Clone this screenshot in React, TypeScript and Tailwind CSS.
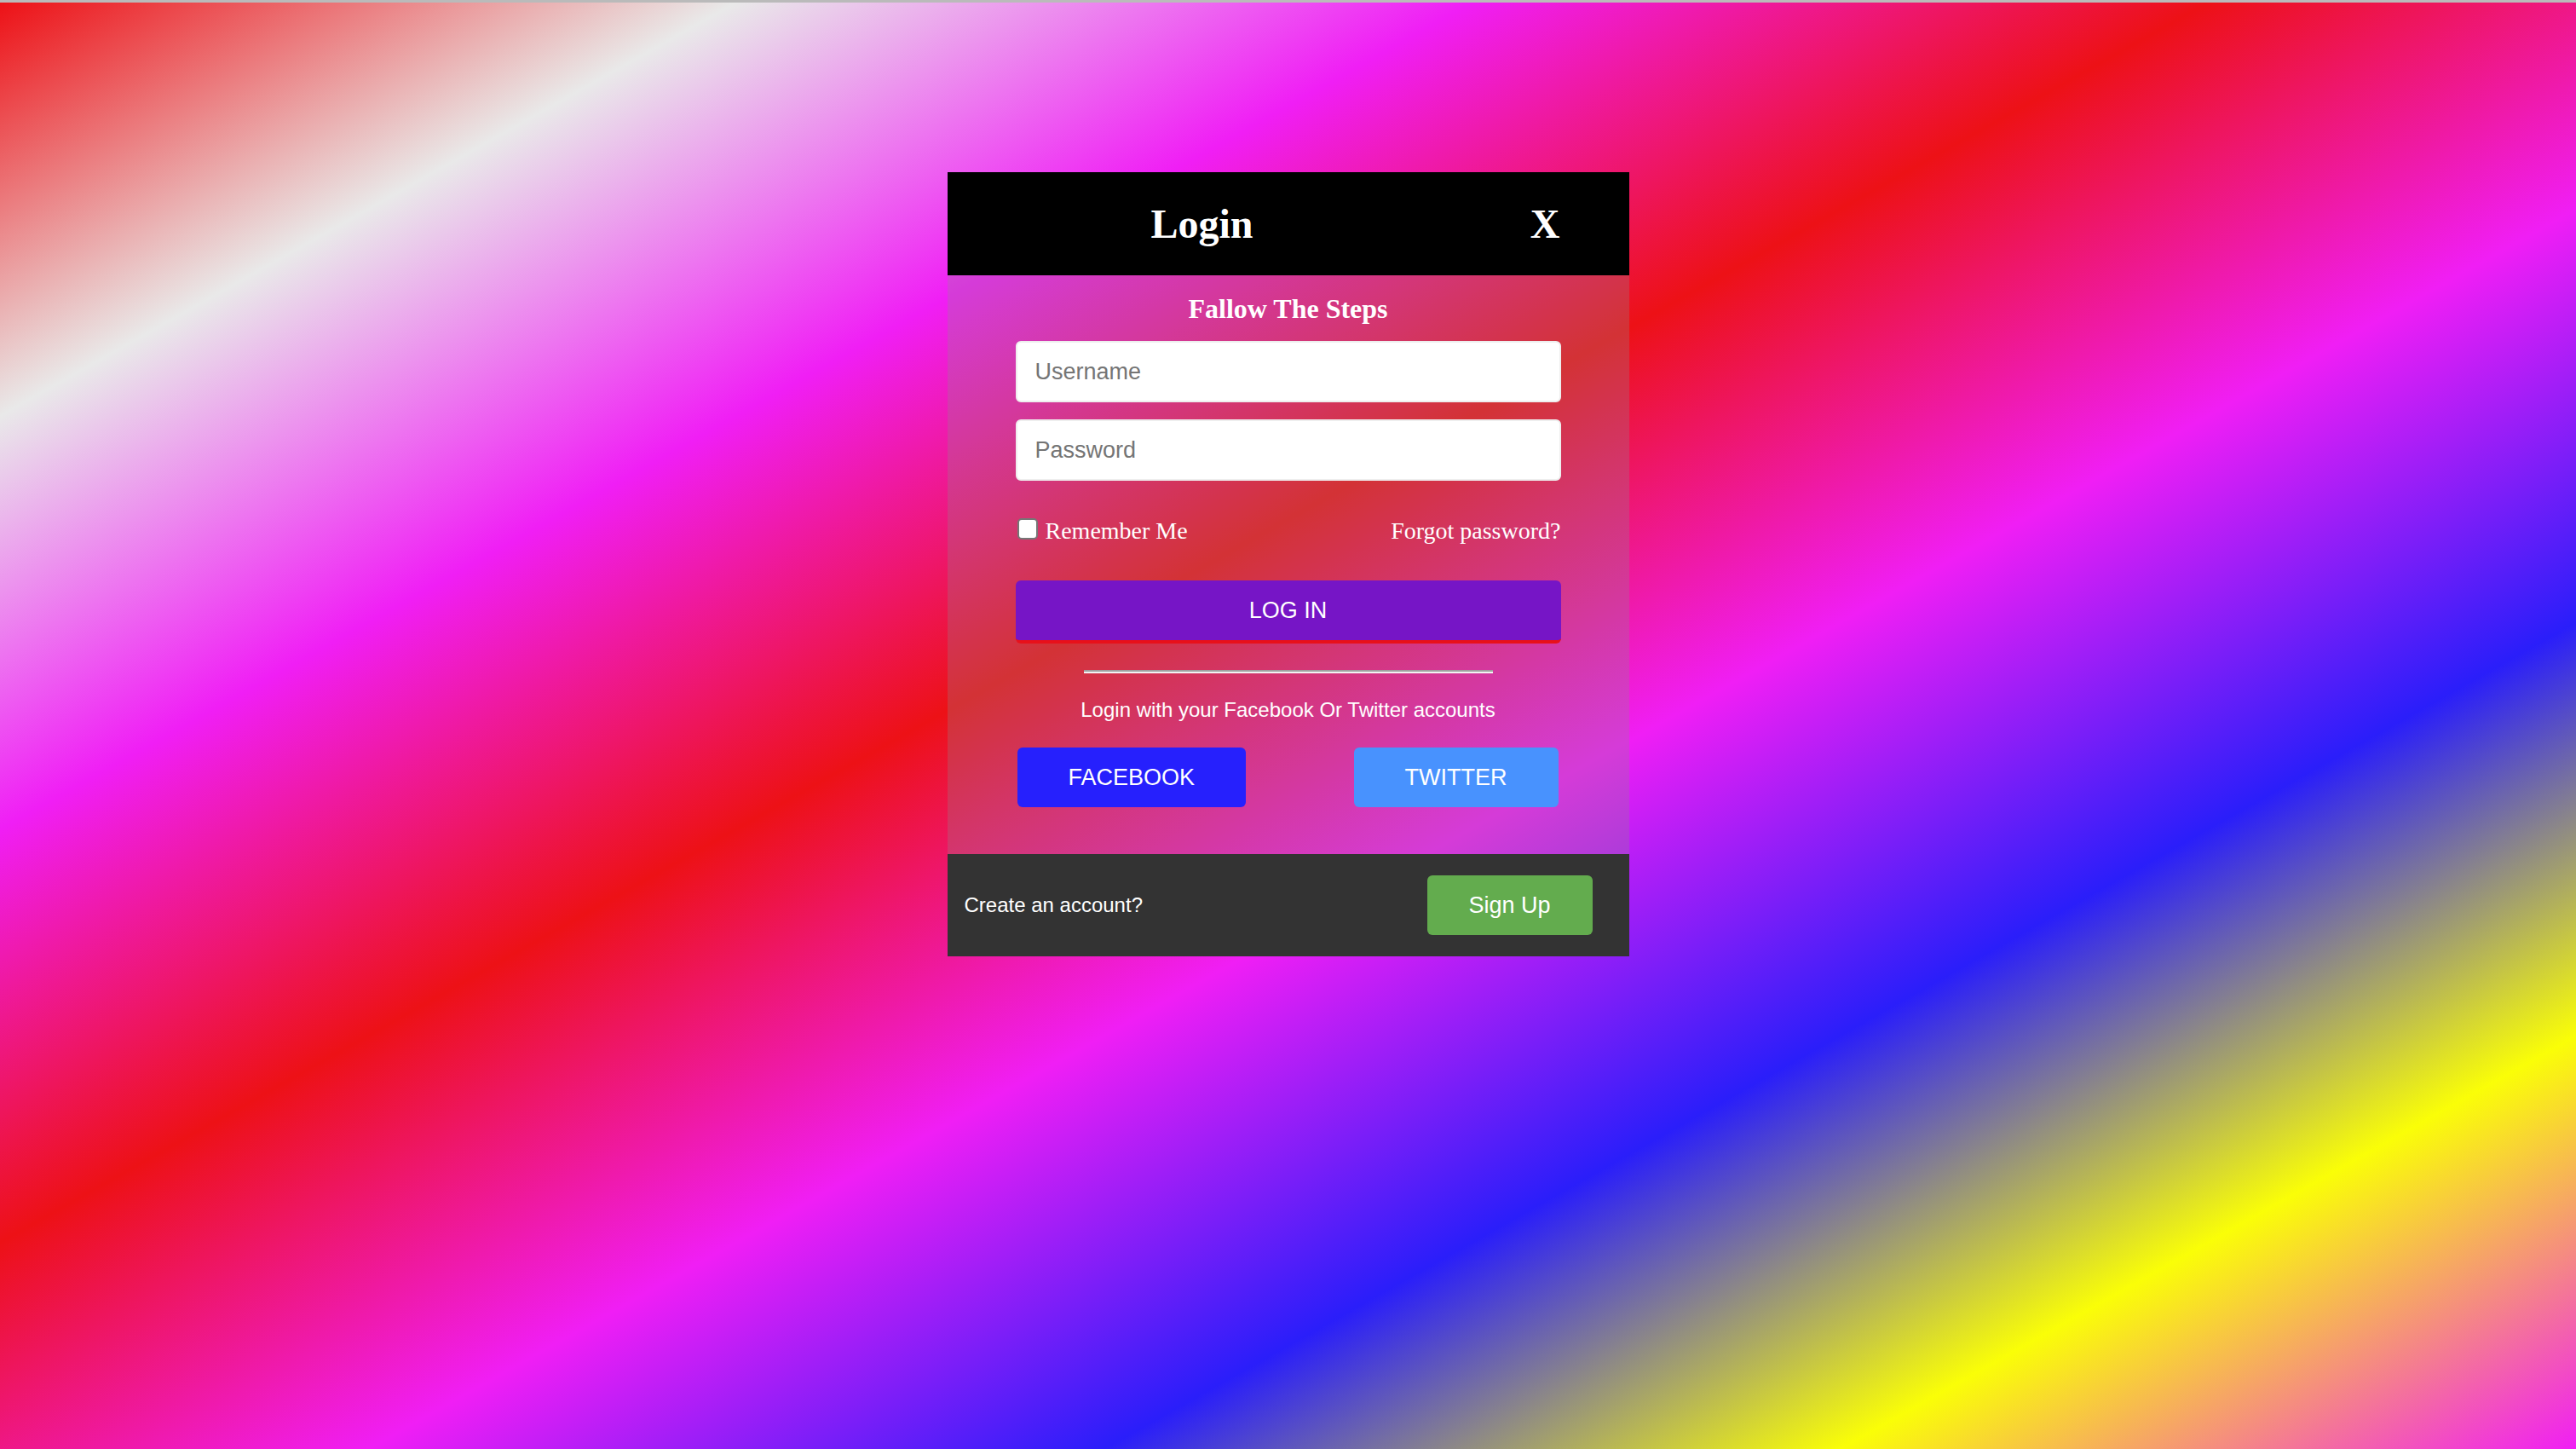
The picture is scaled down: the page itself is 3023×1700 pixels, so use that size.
import React from 'react';

const serif = "font-['Liberation_Serif','Times_New_Roman',serif]";
const sans = "font-['Liberation_Sans',Arial,sans-serif]";

export default function App() {
  return (
    <div className="min-h-screen w-full border-t-[3px] border-[#bababa] bg-[linear-gradient(to_bottom_right,#ed1116,#e9e9e9,#f01ef5,#ed1116,#f01ef5,#2a1efa,#fafe07,#f01ef5)] flex justify-center pt-[199px]">
      <div className="w-[800px] h-fit flex flex-col">
        {/* header */}
        <div className={`h-[121px] bg-black flex items-center justify-between pl-[239px] pr-[81px] text-white ${serif}`}>
          <h1 className="text-[48px] font-bold leading-none">Login</h1>
          <span className="text-[48px] font-bold leading-none cursor-pointer">X</span>
        </div>

        {/* body */}
        <div className="bg-[rgba(140,140,140,0.27)] px-[80px] pt-[23px] pb-[55px] flex flex-col">
          <h3 className={`text-[32px] font-bold leading-[32px] text-white text-center ${serif}`}>Fallow The Steps</h3>

          <input
            type="text"
            placeholder="Username"
            className={`mt-[22px] h-[72px] w-full rounded-[6px] border-2 border-[#eeeeee] bg-white pl-[21px] text-[27px] text-black placeholder:text-[#757575] outline-none ${sans}`}
          />
          <input
            type="password"
            placeholder="Password"
            className={`mt-[20px] h-[72px] w-full rounded-[6px] border-2 border-[#eeeeee] bg-white pl-[21px] text-[27px] text-black placeholder:text-[#757575] outline-none ${sans}`}
          />

          <div className={`mt-[44px] h-[30px] flex items-start justify-between text-white text-[28px] leading-[28px] ${serif}`}>
            <label className="flex items-start gap-[9px] ml-[2px]">
              <input
                type="checkbox"
                className="appearance-none w-[24px] h-[25px] rounded-[5px] border-2 border-[#767676] bg-white"
              />
              <span className="mt-[1px]">Remember Me</span>
            </label>
            <a className="mt-[1px] cursor-pointer">Forgot password?</a>
          </div>

          <button className={`mt-[43px] h-[74px] w-full rounded-[6px] bg-[#7615c6] border-b-4 border-[#e8101a] text-white text-[27px] ${sans}`}>
            LOG IN
          </button>

          <hr className="mt-[31px] mx-auto w-[480px] border-0 border-t-2 border-b-2 border-t-[#a0a0a0] border-b-[#f2f2f2]" />

          <p className={`mt-[31px] text-center text-white text-[24px] leading-[24px] ${sans}`}>
            Login with your Facebook Or Twitter accounts
          </p>

          <div className="mt-[32px] flex justify-between px-[2px]">
            <button className={`h-[70px] px-[60px] rounded-[6px] bg-[#2620fd] text-white text-[27px] ${sans}`}>FACEBOOK</button>
            <button className={`h-[70px] px-[60px] mr-[1px] rounded-[6px] bg-[#4892fe] text-white text-[27px] ${sans}`}>TWITTER</button>
          </div>
        </div>

        {/* footer */}
        <div className={`h-[120px] bg-[#333333] flex items-center justify-between pl-[20px] pr-[43px] ${sans}`}>
          <span className="text-white text-[24px]">Create an account?</span>
          <button className="h-[70px] w-[194px] rounded-[6px] bg-[#63ac4e] text-white text-[27px]">Sign Up</button>
        </div>
      </div>
    </div>
  );
}
